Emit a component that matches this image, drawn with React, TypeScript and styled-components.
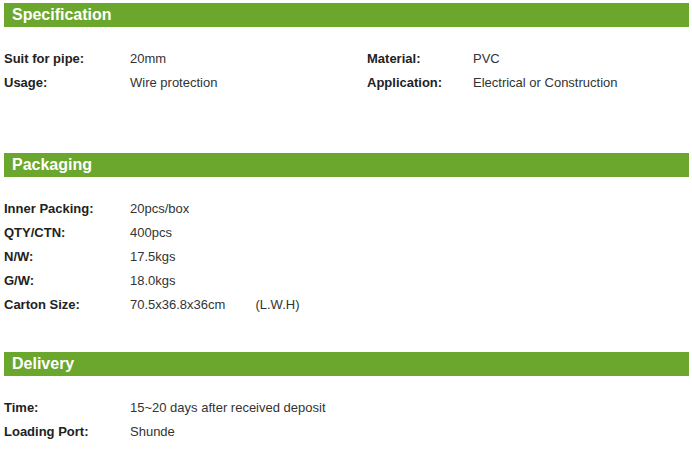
import styled, { createGlobalStyle } from "styled-components";

const GlobalStyle = createGlobalStyle`
  body {
    margin: 0;
    background: #fff;
    font-family: "Liberation Sans", Arial, sans-serif;
  }
`;

const Page = styled.div`
  padding: 3px 3px 0 4px;
`;

const Section = styled.section<{ $gap: number }>`
  margin-bottom: ${(p) => p.$gap}px;
`;

const Header = styled.h2`
  margin: 0;
  height: 24px;
  line-height: 24px;
  padding-left: 8px;
  background: #6aa72c;
  color: #fff;
  font-size: 16px;
  font-weight: 700;
`;

const Rows = styled.div<{ $cols: string }>`
  display: grid;
  grid-template-columns: ${(p) => p.$cols};
  grid-auto-rows: 24px;
  margin-top: 19px;
  font-size: 13px;
  color: #333;
  align-items: center;
`;

const Label = styled.div`
  font-weight: 700;
  color: #222;
`;

const Value = styled.div`
  white-space: nowrap;
`;

const Note = styled.span`
  margin-left: 30px;
`;

const App = () => {
  return (
    <Page>
      <GlobalStyle />
      <Section $gap={59}>
        <Header>Specification</Header>
        <Rows $cols="126px 237px 106px 1fr">
          <Label>Suit for pipe:</Label>
          <Value>20mm</Value>
          <Label>Material:</Label>
          <Value>PVC</Value>
          <Label>Usage:</Label>
          <Value>Wire protection</Value>
          <Label>Application:</Label>
          <Value>Electrical or Construction</Value>
        </Rows>
      </Section>
      <Section $gap={36}>
        <Header>Packaging</Header>
        <Rows $cols="126px 1fr">
          <Label>Inner Packing:</Label>
          <Value>20pcs/box</Value>
          <Label>QTY/CTN:</Label>
          <Value>400pcs</Value>
          <Label>N/W:</Label>
          <Value>17.5kgs</Value>
          <Label>G/W:</Label>
          <Value>18.0kgs</Value>
          <Label>Carton Size:</Label>
          <Value>
            70.5x36.8x36cm<Note>(L.W.H)</Note>
          </Value>
        </Rows>
      </Section>
      <Section $gap={0}>
        <Header>Delivery</Header>
        <Rows $cols="126px 1fr">
          <Label>Time:</Label>
          <Value>15~20 days after received deposit</Value>
          <Label>Loading Port:</Label>
          <Value>Shunde</Value>
        </Rows>
      </Section>
    </Page>
  );
};

export default App;
